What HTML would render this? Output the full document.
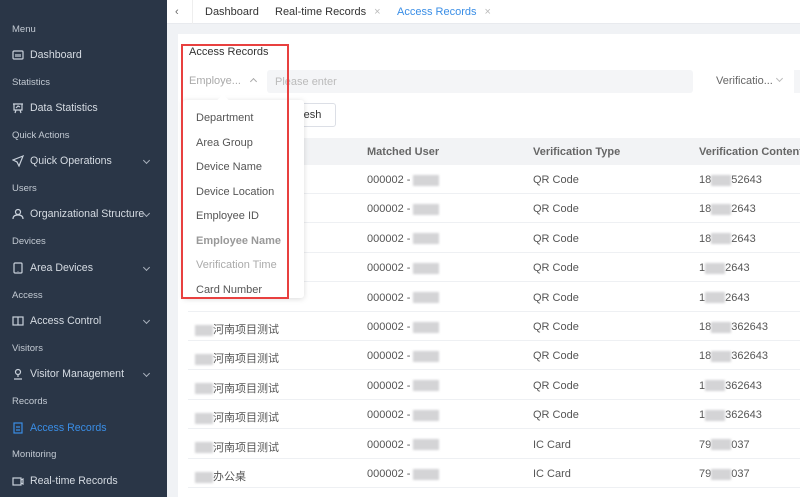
<!DOCTYPE html>
<html><head><meta charset="utf-8"><style>
*{margin:0;padding:0;box-sizing:border-box}
body{width:800px;height:497px;overflow:hidden;font-family:"Liberation Sans","Noto Sans CJK SC",sans-serif;background:#f0f2f5;position:relative;font-size:11px}
.sb{position:absolute;left:0;top:0;width:167px;height:497px;background:#2a3647;color:#c9d1db}
.sb .lab{position:absolute;left:12px;font-size:9.5px;color:#c3cad3}
.sb .it{position:absolute;left:12px;font-size:10.6px;color:#d6dce3;display:flex;align-items:center;white-space:nowrap}
.sb .it svg{width:12px;height:12px;margin-right:6px;stroke:#c9d1db;fill:none;stroke-width:1.2}
.sb .chev{position:absolute;left:144px;width:5px;height:5px;border-right:1px solid #aab2bd;border-bottom:1px solid #aab2bd;transform:rotate(45deg)}
.top{position:absolute;left:167px;top:0;width:633px;height:24px;background:#fff;border-bottom:1px solid #e8eaee}
.top span{position:absolute;top:6px;font-size:11px;color:#333}
.card{position:absolute;left:178px;top:34px;width:622px;height:463px;background:#fff}
.row{position:absolute;left:188px;width:612px;height:29px;border-bottom:1px solid #eef0f3;font-size:11px;color:#555}
.row span{position:absolute;top:9px;white-space:nowrap}
.blur{display:inline-block;background:#d4d4d6;height:11px;vertical-align:middle;filter:blur(1px)}
.dd{position:absolute;left:183px;top:100px;width:121px;height:198px;background:#fff;box-shadow:0 1px 6px rgba(0,0,0,.15);border-radius:3px}
.dd div{position:absolute;left:13px;font-size:11px;color:#555;white-space:nowrap}
</style></head><body>
<div style="position:absolute;left:0;top:0;width:27px;height:3px;background:#e8e8e8"></div>
<div class="sb">
<div class="lab" style="top:24px">Menu</div>
<div class="it" style="top:49px"><svg viewBox="0 0 12 12"><rect x="1" y="2" width="10" height="8" rx="1"/><path d="M4 5v3M6 5v3M8 5v3"/></svg>Dashboard</div>
<div class="lab" style="top:77px">Statistics</div>
<div class="it" style="top:102px"><svg viewBox="0 0 12 12"><path d="M1 2h10M2 2v6h8V2M4 8l-1 3M8 8l1 3M4 6l2-2 2 1"/></svg>Data Statistics</div>
<div class="lab" style="top:130px">Quick Actions</div>
<div class="it" style="top:155px"><svg viewBox="0 0 12 12"><path d="M11 1L1 5l4 2 2 4z"/></svg>Quick Operations</div><div class="chev" style="top:158px"></div>
<div class="lab" style="top:183px">Users</div>
<div class="it" style="top:208px"><svg viewBox="0 0 12 12"><circle cx="6" cy="4" r="2.5"/><path d="M1 11c0-3 2-4 5-4s5 1 5 4"/></svg>Organizational Structure</div><div class="chev" style="top:211px"></div>
<div class="lab" style="top:236px">Devices</div>
<div class="it" style="top:262px"><svg viewBox="0 0 12 12"><rect x="2" y="1" width="8" height="10" rx="1"/><path d="M6 9v.5"/></svg>Area Devices</div><div class="chev" style="top:265px"></div>
<div class="lab" style="top:290px">Access</div>
<div class="it" style="top:315px"><svg viewBox="0 0 12 12"><rect x="1" y="2" width="10" height="8"/><path d="M6 2v8"/></svg>Access Control</div><div class="chev" style="top:318px"></div>
<div class="lab" style="top:343px">Visitors</div>
<div class="it" style="top:368px"><svg viewBox="0 0 12 12"><circle cx="6" cy="4" r="2.5"/><path d="M6 7v2M2 11h8"/></svg>Visitor Management</div><div class="chev" style="top:371px"></div>
<div class="lab" style="top:396px">Records</div>
<div class="it" style="top:422px;color:#3a8ee6"><svg viewBox="0 0 12 12" style="stroke:#3a8ee6"><rect x="2" y="1" width="8" height="10"/><path d="M4 5h4M4 8h4"/></svg>Access Records</div>
<div class="lab" style="top:449px">Monitoring</div>
<div class="it" style="top:475px"><svg viewBox="0 0 12 12"><rect x="1" y="3" width="8" height="7"/><path d="M9 5l2-1v5l-2-1"/></svg>Real-time Records</div>
</div>
<div class="top">
<span style="left:8px;color:#666">&lsaquo;</span>
<div style="position:absolute;left:25px;top:0;width:1px;height:24px;background:#eee"></div>
<span style="left:38px">Dashboard</span>
<span style="left:108px">Real-time Records <span style="position:static;color:#bbb;margin-left:5px">×</span></span>
<span style="left:230px;color:#3a8ee6">Access Records <span style="position:static;color:#bbb;margin-left:5px">×</span></span>
</div>
<div class="card"></div>
<div style="position:absolute;left:189px;top:46px;font-size:11px;color:#333">Access Records</div>
<div style="position:absolute;left:189px;top:75px;font-size:11px;color:#aaa">Employe...</div>
<div style="position:absolute;left:251px;top:79px;width:5px;height:5px;border-left:1px solid #aaa;border-top:1px solid #aaa;transform:rotate(45deg)"></div>
<div style="position:absolute;left:267px;top:70px;width:426px;height:23px;background:#f4f5f7;border-radius:3px;color:#bbb;padding:6px 8px">Please enter</div>
<div style="position:absolute;left:716px;top:75px;color:#666">Verificatio...</div>
<div style="position:absolute;left:777px;top:76px;width:5px;height:5px;border-right:1px solid #bbb;border-bottom:1px solid #bbb;transform:rotate(45deg)"></div>
<div style="position:absolute;left:794px;top:70px;width:6px;height:23px;background:#f4f5f7"></div>
<div style="position:absolute;left:280px;top:103px;width:56px;height:24px;border:1px solid #dcdfe6;border-radius:3px;background:#fff;padding:5px 0 0 19px;color:#333">resh</div>
<div style="position:absolute;left:188px;top:138px;width:612px;height:27px;background:#f2f3f5;font-weight:bold;color:#666;font-size:11px;white-space:nowrap">
<span style="position:absolute;left:179px;top:8px">Matched User</span>
<span style="position:absolute;left:345px;top:8px">Verification Type</span>
<span style="position:absolute;left:511px;top:8px">Verification Content</span></div>
<div id="rows"></div>
<script>
var t=["QR Code","QR Code","QR Code","QR Code","QR Code","QR Code","QR Code","QR Code","QR Code","IC Card","IC Card"];
var c=["18","18","18","1","1","18","18","1","1","79","79"],e=["52643","2643","2643","2643","2643","362643","362643","362643","362643","037","037"];
var n=["","","","","","河南项目测试","河南项目测试","河南项目测试","河南项目测试","河南项目测试","办公桌"];
var h="";for(var i=0;i<11;i++){var y=165+i*29.4;
h+='<div class="row" style="top:'+y+'px"><span style="left:7px">'+(n[i]?'<i class="blur" style="width:18px"></i>'+n[i]:'')+'</span><span style="left:179px">000002 - <i class="blur" style="width:26px"></i></span><span style="left:345px">'+t[i]+'</span><span style="left:511px">'+c[i]+'<i class="blur" style="width:20px"></i>'+e[i]+'</span></div>';}
document.getElementById("rows").innerHTML=h;
</script>
<div class="dd">
<div style="top:12px">Department</div><div style="top:37px">Area Group</div><div style="top:61px">Device Name</div><div style="top:86px">Device Location</div><div style="top:110px">Employee ID</div><div style="top:135px;font-weight:bold;color:#999">Employee Name</div><div style="top:159px;color:#aaa">Verification Time</div><div style="top:184px">Card Number</div>
</div>
<div style="position:absolute;left:219px;top:96px;width:8px;height:8px;background:#fff;transform:rotate(45deg)"></div>
<div style="position:absolute;left:181px;top:44px;width:108px;height:255px;border:2px solid #e8403f"></div>
</body></html>
